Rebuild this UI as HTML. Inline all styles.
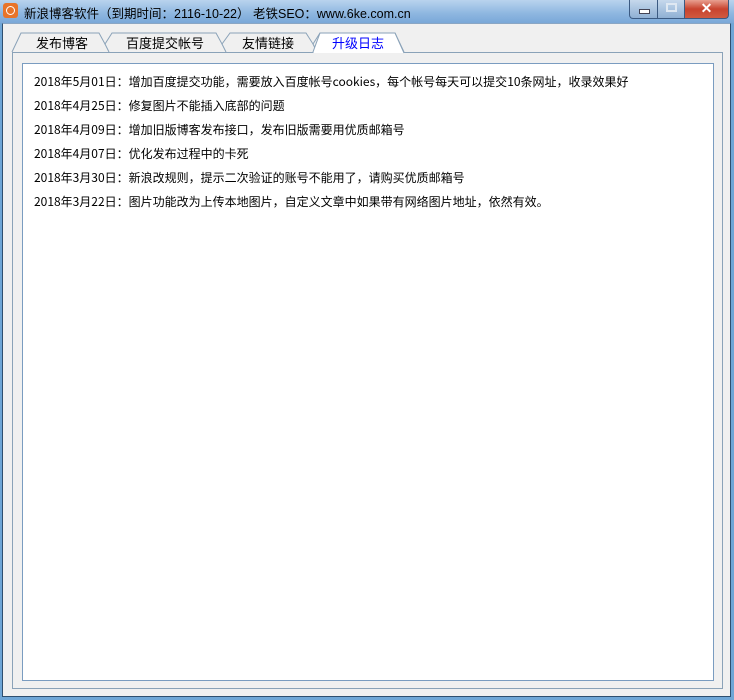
<!DOCTYPE html>
<html><head><meta charset="utf-8"><style>
body{margin:0;width:734px;height:700px;overflow:hidden;background:#6fa6d6;font-family:"Liberation Sans","Noto Sans CJK SC","WenQuanYi Zen Hei",sans-serif;position:relative}
.title{position:absolute;left:0;top:0;width:734px;height:23px;background:linear-gradient(#b9d3ee,#8db6e0 60%,#7aa8d8)}
.ttl{position:absolute;left:24px;top:3px;font-size:12.5px;color:#000;white-space:nowrap}
.ico{position:absolute;left:3px;top:3px;width:15px;height:15px;border-radius:3px;background:#e8742a}
.ico:after{content:"";position:absolute;left:3px;top:3px;width:7px;height:7px;border:1px solid #fff;border-radius:50%}
.btn{position:absolute;top:0;height:18px;border:1px solid #3b5a82;border-top:none}
.client{position:absolute;left:2px;top:23px;width:727px;height:672px;background:#f0f0f0;border:1px solid #2f4f6f;border-top:1px solid #8aa6c4}
.panel{position:absolute;left:12px;top:52px;width:709px;height:635px;border:1px solid #8aa2b8;background:#f0f0f0}
.box{position:absolute;left:22px;top:63px;width:690px;height:616px;border:1px solid #7a9cc0;background:#fff}
.line{position:absolute;left:34px;font-size:12px;white-space:nowrap;color:#000;font-family:"Noto Sans CJK SC","WenQuanYi Zen Hei",sans-serif}
.tab{position:absolute;top:33px;height:19px;font-size:13px;text-align:center;line-height:21px}
</style></head><body>
<div class="title"><div class="ico"></div><div class="ttl">新浪博客软件（到期时间：2116-10-22） 老铁SEO：www.6ke.com.cn</div>
<div class="btn" style="left:629px;width:27px;background:linear-gradient(#c6d8ec,#8fb0d4);border-radius:0 0 0 4px"><div style="position:absolute;left:9px;top:9px;width:9px;height:3px;background:#fff;border:1px solid #445"></div></div>
<div class="btn" style="left:657px;width:26px;background:linear-gradient(#c6d8ec,#8fb0d4)"><div style="position:absolute;left:8px;top:3px;width:7px;height:5px;border:2px solid #dfe8f2"></div></div>
<div class="btn" style="left:684px;width:43px;background:linear-gradient(#e8a090,#c8432e 50%,#d05a40);border-radius:0 0 4px 0;color:#fff;font-weight:bold;text-align:center;font-size:14px;line-height:16px">✕</div>
</div>
<div class="client"></div>
<svg style="position:absolute;left:0;top:0" width="734" height="60">
<path d="M12 52 L21 33 H99 L105 44 L112 33 H216 L222 44 L230 33 H306 L313 44 L320 33 H395 L404 52" fill="#f0f0f0" stroke="#8aa2b8"/>
<path d="M105 44 L109 52 M222 44 L226 52 M313 44 L317 52" stroke="#8aa2b8" fill="none"/>
</svg>
<div class="panel"></div>
<svg style="position:absolute;left:0;top:0" width="734" height="60">
<path d="M313 53 V52 L320 33 H395 L404 53" fill="#fff" stroke="#8aa2b8"/></svg>
<div class="tab" style="left:22px;width:80px">发布博客</div>
<div class="tab" style="left:115px;width:100px">百度提交帐号</div>
<div class="tab" style="left:228px;width:80px">友情链接</div>
<div class="tab" style="left:318px;width:80px;color:#0000ff">升级日志</div>
<div class="box"></div>
<div class="line" style="top:73px">2018年5月01日：增加百度提交功能，需要放入百度帐号cookies，每个帐号每天可以提交10条网址，收录效果好</div>
<div class="line" style="top:97px">2018年4月25日：修复图片不能插入底部的问题</div>
<div class="line" style="top:121px">2018年4月09日：增加旧版博客发布接口，发布旧版需要用优质邮箱号</div>
<div class="line" style="top:145px">2018年4月07日：优化发布过程中的卡死</div>
<div class="line" style="top:169px">2018年3月30日：新浪改规则，提示二次验证的账号不能用了，请购买优质邮箱号</div>
<div class="line" style="top:193px">2018年3月22日：图片功能改为上传本地图片，自定义文章中如果带有网络图片地址，依然有效。</div>
</body></html>
